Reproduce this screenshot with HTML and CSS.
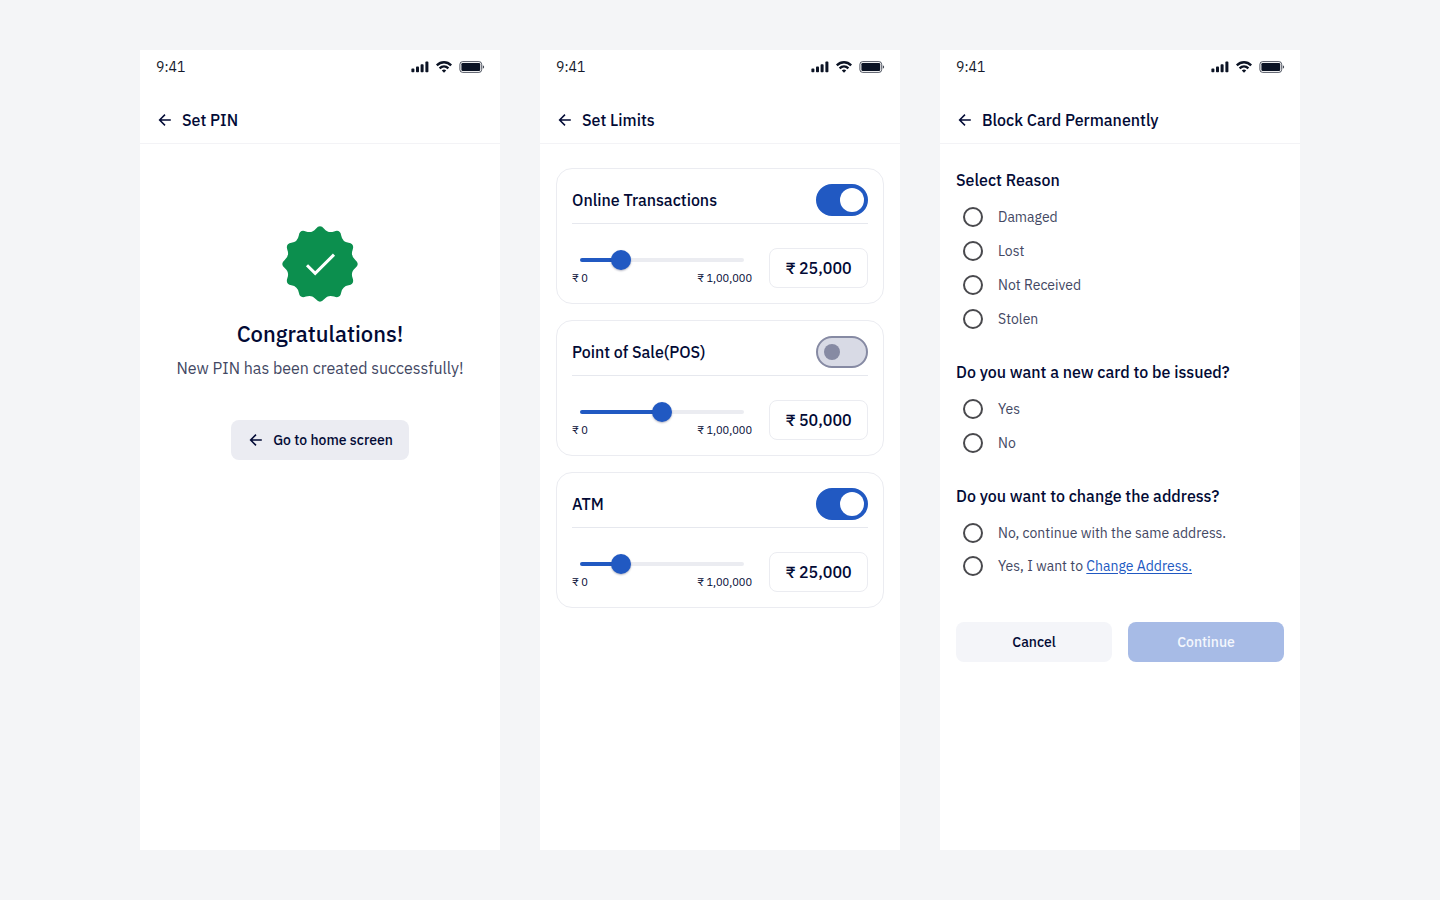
FILE: index.html
```html
<!DOCTYPE html>
<html lang="en">

<head>
  <meta charset="utf-8">
  <meta name="viewport" content="width=device-width, initial-scale=1">
  <title>Card Settings</title>
  <link rel="stylesheet" href="styles.css">
</head>

<body>
  <!-- shared icons -->
  <svg class="sprite" aria-hidden="true">
    <symbol id="arrow-back" viewBox="0 0 18 18">
      <path d="M14.8 9H4M9 3.6L3.6 9L9 14.4" fill="none" stroke="currentColor" stroke-width="1.5" />
    </symbol>
    <symbol id="status-icons" viewBox="0 0 74 12">
      <rect x="0.4" y="7.6" width="3" height="3.6" rx="0.8" />
      <rect x="5" y="5.6" width="3" height="5.6" rx="0.8" />
      <rect x="9.6" y="3.2" width="3" height="8" rx="0.8" />
      <rect x="14.4" y="0.6" width="3" height="10.6" rx="0.8" />
      <g fill="none" stroke="currentColor" stroke-width="2.3">
        <path d="M25.8 4.4C30 0.2 36 0.2 40.2 4.4" />
        <path d="M28.6 7.4C31.2 4.8 34.8 4.8 37.4 7.4" />
      </g>
      <path d="M30.8 9.5C32.2 8.3 33.8 8.3 35.2 9.5L33 11.7Z" />
      <rect x="48.9" y="0.6" width="21.8" height="10.8" rx="2.8" fill="none" stroke="currentColor" opacity="0.7" />
      <rect x="50.4" y="2.1" width="18.8" height="7.8" rx="1.2" />
      <path d="M71.8 4.2V7.8C73.6 7 73.6 5 71.8 4.2Z" opacity="0.8" />
    </symbol>
  </svg>

  <main class="screens">

    <!-- Set PIN -->
    <section class="screen">
      <div class="status-bar">
        <span>9:41</span>
        <svg class="status-icons"><use href="#status-icons" /></svg>
      </div>
      <header class="title-bar">
        <a href="#" class="back" aria-label="Back"><svg class="icon"><use href="#arrow-back" /></svg></a>
        <h1>Set PIN</h1>
      </header>
      <div class="success">
        <svg class="badge" viewBox="-38 -38 76 76">
          <path fill="#0c8f4e" d="M-4.1 -35.3Q0 -40.2 4.1 -35.3Q8.2 -30.4 14.1 -32.6Q20.1 -34.8 21.2 -28.6Q22.3 -22.3 28.6 -21.2Q34.8 -20.1 32.6 -14.1Q30.4 -8.2 35.3 -4.1Q40.2 0 35.3 4.1Q30.4 8.2 32.6 14.1Q34.8 20.1 28.6 21.2Q22.3 22.3 21.2 28.6Q20.1 34.8 14.1 32.6Q8.2 30.4 4.1 35.3Q0 40.2 -4.1 35.3Q-8.2 30.4 -14.1 32.6Q-20.1 34.8 -21.2 28.6Q-22.3 22.3 -28.6 21.2Q-34.8 20.1 -32.6 14.1Q-30.4 8.2 -35.3 4.1Q-40.2 0 -35.3 -4.1Q-30.4 -8.2 -32.6 -14.1Q-34.8 -20.1 -28.6 -21.2Q-22.3 -22.3 -21.2 -28.6Q-20.1 -34.8 -14.1 -32.6Q-8.2 -30.4 -4.1 -35.3Z" />
          <path fill="none" stroke="#fff" stroke-width="3" d="M-13 1.2L-4.8 9.4L14 -9.4" />
        </svg>
        <h2>Congratulations!</h2>
        <p>New PIN has been created successfully!</p>
        <button type="button" class="btn btn-home">
          <svg class="icon"><use href="#arrow-back" /></svg>
          Go to home screen
        </button>
      </div>
    </section>

    <!-- Set Limits -->
    <section class="screen">
      <div class="status-bar">
        <span>9:41</span>
        <svg class="status-icons"><use href="#status-icons" /></svg>
      </div>
      <header class="title-bar">
        <a href="#" class="back" aria-label="Back"><svg class="icon"><use href="#arrow-back" /></svg></a>
        <h1>Set Limits</h1>
      </header>
      <div class="limits">
        <article class="limit-card">
          <div class="limit-head">
            <label for="online">Online Transactions</label>
            <input type="checkbox" id="online" class="toggle" checked>
          </div>
          <div class="limit-body">
            <div class="range">
              <div class="slider">
                <span class="track" style="--value: 25%"></span>
                <input type="range" min="0" max="100000" step="1000" value="25000" aria-label="Online limit">
              </div>
              <div class="range-labels"><span>₹ 0</span><span>₹ 1,00,000</span></div>
            </div>
            <input type="text" class="amount" value="₹ 25,000" aria-label="Online amount">
          </div>
        </article>

        <article class="limit-card">
          <div class="limit-head">
            <label for="pos">Point of Sale(POS)</label>
            <input type="checkbox" id="pos" class="toggle">
          </div>
          <div class="limit-body">
            <div class="range">
              <div class="slider">
                <span class="track" style="--value: 50%"></span>
                <input type="range" min="0" max="100000" step="1000" value="50000" aria-label="POS limit">
              </div>
              <div class="range-labels"><span>₹ 0</span><span>₹ 1,00,000</span></div>
            </div>
            <input type="text" class="amount" value="₹ 50,000" aria-label="POS amount">
          </div>
        </article>

        <article class="limit-card">
          <div class="limit-head">
            <label for="atm">ATM</label>
            <input type="checkbox" id="atm" class="toggle" checked>
          </div>
          <div class="limit-body">
            <div class="range">
              <div class="slider">
                <span class="track" style="--value: 25%"></span>
                <input type="range" min="0" max="100000" step="1000" value="25000" aria-label="ATM limit">
              </div>
              <div class="range-labels"><span>₹ 0</span><span>₹ 1,00,000</span></div>
            </div>
            <input type="text" class="amount" value="₹ 25,000" aria-label="ATM amount">
          </div>
        </article>
      </div>
    </section>

    <!-- Block Card -->
    <section class="screen">
      <div class="status-bar">
        <span>9:41</span>
        <svg class="status-icons"><use href="#status-icons" /></svg>
      </div>
      <header class="title-bar">
        <a href="#" class="back" aria-label="Back"><svg class="icon"><use href="#arrow-back" /></svg></a>
        <h1>Block Card Permanently</h1>
      </header>
      <form class="block-form">
        <fieldset>
          <legend>Select Reason</legend>
          <label><input type="radio" name="reason"> Damaged</label>
          <label><input type="radio" name="reason"> Lost</label>
          <label><input type="radio" name="reason"> Not Received</label>
          <label><input type="radio" name="reason"> Stolen</label>
        </fieldset>
        <fieldset>
          <legend>Do you want a new card to be issued?</legend>
          <label><input type="radio" name="new-card"> Yes</label>
          <label><input type="radio" name="new-card"> No</label>
        </fieldset>
        <fieldset class="compact">
          <legend>Do you want to change the address?</legend>
          <label><input type="radio" name="address"> No, continue with the same address.</label>
          <label><input type="radio" name="address"> <span>Yes, I want to <a href="#">Change Address.</a></span></label>
        </fieldset>
        <div class="actions">
          <button type="button" class="btn btn-cancel">Cancel</button>
          <button type="submit" class="btn btn-continue" disabled>Continue</button>
        </div>
      </form>
    </section>

  </main>
</body>

</html>
```
FILE: styles.css
```css
* {
  box-sizing: border-box;
}

body {
  margin: 0;
  background-color: #f4f5f7;
  color: #020a35;
  font-family: "IBM Plex Sans", Inter, sans-serif;
  font-size: 16px;
  line-height: 24px;
}

h1, h2, p {
  margin: 0;
}

.sprite {
  display: none;
}

.screens {
  display: grid;
  grid-template-columns: repeat(auto-fit, minmax(320px, 360px));
  justify-content: center;
  gap: 40px;
  min-height: 100vh;
  padding: 50px 40px;
}

.screen {
  background-color: #fff;
}

.icon {
  display: block;
  width: 18px;
  height: 18px;
}

/* Top of each screen */
.status-bar {
  display: flex;
  align-items: center;
  justify-content: space-between;
  height: 34px;
  padding: 0 15px 0 16px;
  font-size: 14px;
  color: #141a2c;
}

.status-icons {
  width: 74px;
  height: 12px;
  fill: currentColor;
  color: #0b1324;
}

.title-bar {
  display: flex;
  align-items: center;
  gap: 8px;
  height: 48px;
  margin-top: 12px;
  padding: 0 16px;
  border-bottom: 1px solid #f3f3f6;
}

.title-bar h1 {
  font-size: 16px;
  font-weight: 500;
}

.back {
  color: inherit;
}

.btn {
  height: 40px;
  border: none;
  border-radius: 8px;
  color: inherit;
  font-family: inherit;
  font-size: 14px;
  font-weight: 500;
}

/* Set PIN */
.success {
  display: flex;
  flex-direction: column;
  align-items: center;
  padding: 82px 16px 24px;
  text-align: center;
}

.badge {
  width: 76px;
  height: 76px;
}

.success h2 {
  margin-top: 16px;
  font-size: 22px;
  font-weight: 500;
  line-height: 32px;
}

.success p {
  margin-top: 6px;
  color: #434863;
}

.btn-home {
  display: flex;
  align-items: center;
  gap: 8px;
  margin-top: 40px;
  padding: 0 16px;
  background-color: #ebecf2;
}

/* Set Limits */
.limits {
  display: flex;
  flex-direction: column;
  gap: 16px;
  padding: 24px 16px;
}

.limit-card {
  padding: 15px;
  border: 1px solid #ebecf1;
  border-radius: 16px;
}

.limit-head {
  display: flex;
  align-items: center;
  justify-content: space-between;
  padding-bottom: 7px;
  border-bottom: 1px solid #e6e8ee;
  font-weight: 500;
}

.toggle {
  appearance: none;
  display: flex;
  align-items: center;
  width: 52px;
  height: 32px;
  margin: 0;
  padding: 0 6px;
  border: 2px solid #868aa3;
  border-radius: 16px;
  background-color: #d8dae5;
}

.toggle::before {
  content: "";
  width: 16px;
  height: 16px;
  border-radius: 50%;
  background-color: #868aa3;
}

.toggle:checked {
  justify-content: flex-end;
  padding: 0 2px;
  border-color: #2159c2;
  background-color: #2159c2;
}

.toggle:checked::before {
  width: 24px;
  height: 24px;
  background-color: #fff;
}

.limit-body {
  display: flex;
  align-items: center;
  justify-content: space-between;
  gap: 17px;
  padding-top: 24px;
}

.range {
  flex: 1;
}

.slider {
  display: grid;
  align-items: center;
  height: 20px;
}

.track,
.slider input {
  grid-area: 1 / 1;
}

.track {
  height: 4px;
  margin: 0 8px;
  border-radius: 2px;
  background: linear-gradient(to right, #2159c2 var(--value), #ebecf1 var(--value));
}

/* the thumb centre travels along the full track */
.slider input {
  appearance: none;
  height: 20px;
  margin: 0 -2px;
  background: none;
}

.slider input::-webkit-slider-thumb {
  appearance: none;
  width: 20px;
  height: 20px;
  border-radius: 50%;
  background-color: #2159c2;
  box-shadow: 0 1px 2px rgba(2, 10, 53, 0.3);
}

.range-labels {
  display: flex;
  justify-content: space-between;
  font-size: 11px;
  line-height: 16px;
}

.amount {
  width: 99px;
  height: 40px;
  padding: 0;
  border: 1px solid #ebecf1;
  border-radius: 8px;
  color: inherit;
  font-family: inherit;
  font-size: 16px;
  font-weight: 500;
  text-align: center;
}

/* Block Card */
.block-form {
  padding: 24px 16px;
}

fieldset {
  margin: 0 0 24px;
  padding: 0;
  border: none;
}

legend {
  margin-bottom: 8px;
  padding: 0;
  font-weight: 500;
}

fieldset label {
  display: flex;
  align-items: center;
  gap: 15px;
  height: 34px;
  padding-left: 7px;
  color: #434863;
  font-size: 14px;
}

.compact label {
  height: 33px;
}

fieldset input {
  appearance: none;
  width: 20px;
  height: 20px;
  margin: 0;
  border: 2px solid #49494d;
  border-radius: 50%;
}

fieldset input:checked {
  border: 6px solid #2159c2;
}

fieldset a {
  color: #2159c2;
  text-underline-offset: 2px;
}

.actions {
  display: grid;
  grid-template-columns: 1fr 1fr;
  gap: 16px;
  margin-top: 40px;
}

.btn-cancel {
  background-color: #f4f5f9;
}

.btn-continue {
  background-color: #a7bbe6;
  color: #f4f7fd;
}
```
